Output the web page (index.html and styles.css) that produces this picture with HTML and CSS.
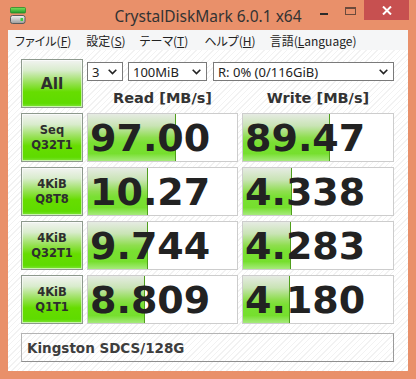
FILE: index.html
```html
<!DOCTYPE html>
<html lang="ja">
<head>
  <meta charset="UTF-8" />
  <title>CrystalDiskMark 6.0.1 x64</title>
  <link rel="stylesheet" href="styles.css">
</head>
<body>
  <div class="window">

    <!-- Title bar -->
    <div class="titlebar">
      <div class="tb-left">
        <svg class="app-icon" width="16" height="17" viewBox="0 0 16 17">
          <defs>
            <linearGradient id="gTop" x1="0" y1="0" x2="0" y2="1">
              <stop offset="0" stop-color="#7ee05a"/>
              <stop offset="1" stop-color="#1f9a2a"/>
            </linearGradient>
            <linearGradient id="gDrive" x1="0" y1="0" x2="0" y2="1">
              <stop offset="0" stop-color="#f4f4f4"/>
              <stop offset="1" stop-color="#9a9a9a"/>
            </linearGradient>
          </defs>
          <rect x="0.5" y="0.5" width="15" height="5.5" rx="1" fill="url(#gTop)" stroke="#2a8a2a" stroke-width="0.8"/>
          <rect x="0.5" y="8.5" width="14.5" height="8" rx="2" fill="url(#gDrive)" stroke="#5a5a5a"/>
          <rect x="10.5" y="11" width="2.5" height="3" fill="#3ccf3c"/>
        </svg>
      </div>
      <div class="title">CrystalDiskMark 6.0.1 x64</div>
      <div class="controls">
        <span class="btn-min"><i></i></span>
        <span class="btn-max"><i></i></span>
        <span class="btn-close">
          <svg width="10" height="9" viewBox="0 0 10 9">
            <path d="M1 0.5 L9 8.5 M9 0.5 L1 8.5" stroke="#fff" stroke-width="2"/>
          </svg>
        </span>
      </div>
    </div>

    <div class="client">

      <!-- Menu -->
      <div class="menubar">
        <span class="menu-item">ファイル(<u>F</u>)</span>
        <span class="menu-item">設定(<u>S</u>)</span>
        <span class="menu-item">テーマ(<u>T</u>)</span>
        <span class="menu-item">ヘルプ(<u>H</u>)</span>
        <span class="menu-item">言語(<u>L</u>anguage)</span>
      </div>

      <div class="main">
        <div class="grid">
          <div class="test-btn all">All</div>

          <div class="selects">
            <div class="combo count"><span>3</span><svg class="chev" width="9" height="6" viewBox="0 0 9 6"><path d="M0.7 0.8 L4.5 4.6 L8.3 0.8" fill="none" stroke="#222" stroke-width="1.6"/></svg></div>
            <div class="combo size"><span>100MiB</span><svg class="chev" width="9" height="6" viewBox="0 0 9 6"><path d="M0.7 0.8 L4.5 4.6 L8.3 0.8" fill="none" stroke="#222" stroke-width="1.6"/></svg></div>
            <div class="combo drive"><span>R: 0% (0/116GiB)</span><svg class="chev" width="9" height="6" viewBox="0 0 9 6"><path d="M0.7 0.8 L4.5 4.6 L8.3 0.8" fill="none" stroke="#222" stroke-width="1.6"/></svg></div>
          </div>

          <div class="col-head">Read [MB/s]</div>
          <div class="col-head">Write [MB/s]</div>

          <div class="test-btn">Seq<br>Q32T1</div>
          <div class="meter"><div class="bar" style="width:59%"></div><span class="value">97.00</span></div>
          <div class="meter"><div class="bar" style="width:58%"></div><span class="value">89.47</span></div>

          <div class="test-btn">4KiB<br>Q8T8</div>
          <div class="meter"><div class="bar" style="width:40.5%"></div><span class="value">10.27</span></div>
          <div class="meter"><div class="bar" style="width:32.5%"></div><span class="value">4.338</span></div>

          <div class="test-btn">4KiB<br>Q32T1</div>
          <div class="meter"><div class="bar" style="width:40%"></div><span class="value">9.744</span></div>
          <div class="meter"><div class="bar" style="width:32%"></div><span class="value">4.283</span></div>

          <div class="test-btn">4KiB<br>Q1T1</div>
          <div class="meter"><div class="bar" style="width:38.5%"></div><span class="value">8.809</span></div>
          <div class="meter"><div class="bar" style="width:31.5%"></div><span class="value">4.180</span></div>
        </div>

        <div class="comment">Kingston SDCS/128G</div>
      </div>
    </div>
  </div>
</body>
</html>
```

FILE: styles.css
```css
/* — Base — */
* { box-sizing: border-box; margin: 0; padding: 0; }
body {
  width: 416px; height: 379px; overflow: hidden;
  font-family: "DejaVu Sans", sans-serif;
  color: #222;
}

/* — Window frame — */
.window {
  height: 379px;
  background: #e9906a;
  padding: 0 8px 8px;
  display: flex; flex-direction: column;
}
.titlebar {
  height: 30px; margin: 0 -8px;
  display: grid; grid-template-columns: 1fr auto 1fr;
}
.app-icon { display: block; margin: 7px 0 0 10px; }
.title {
  font-family: "Noto Sans", sans-serif;
  font-size: 15.5px; color: #333;
  line-height: 30px; padding-top: 1px;
}
.controls {
  display: flex; justify-content: flex-end; align-items: flex-start;
  padding-right: 7px;
}
.btn-min, .btn-max { height: 20px; display: flex; justify-content: center; }
.btn-min { width: 26px; }
.btn-min i { width: 8px; height: 2px; margin-top: 13px; background: #2b2b2b; }
.btn-max { width: 27px; }
.btn-max i {
  width: 11px; height: 8px; margin-top: 7px;
  border: 1px solid #6b4a3c; border-top-width: 2px;
}
.btn-close {
  width: 45px; height: 20px; background: #c75050;
  display: flex; justify-content: center; align-items: center;
}

/* — Client area — */
.client {
  flex: 1;
  background: repeating-linear-gradient(135deg, #fff 0 3px, #f2f2f2 3px 4px);
  display: flex; flex-direction: column;
}
.menubar {
  height: 20px; background: #f5f6f7;
  display: flex;
  font-family: "Noto Sans CJK JP", sans-serif;
  font-feature-settings: "palt";
  font-size: 12px; line-height: 20px; color: #222;
}
.menu-item { padding: 1px 7px 0; }
.menu-item:nth-child(2) { padding-left: 8px; }
.menu-item:nth-child(4) { padding-left: 9px; }

.main { padding: 9px 14px 9px 13px; }
.grid {
  display: grid;
  grid-template-columns: 62px 151px 152px;
  grid-template-rows: 22px 22px repeat(4, 49px);
  column-gap: 4px; row-gap: 5px;
}

/* — Test buttons — */
.test-btn {
  border: 1px solid #8d998d;
  box-shadow: inset 0 0 0 1px rgba(255,255,255,0.6);
  background: linear-gradient(#f2f3f1 0%, #d9eccd 22%, #98e158 48%, #66dd00 68%, #5fdb00 92%, #7fe43a 100%);
  display: flex; justify-content: center; align-items: center;
  text-align: center;
  font-weight: bold; font-size: 11.5px; line-height: 15px; color: #2e2e2e;
  padding-top: 1px;
}
.test-btn.all { grid-row: span 2; font-size: 15.5px; padding-top: 2px; }

/* — Selects — */
.selects {
  grid-column: 2 / 4; align-self: end;
  display: flex; gap: 5px; height: 19px;
}
.combo {
  border: 1px solid #7a7a7a; background: #fff;
  display: flex; justify-content: space-between; align-items: center;
  padding: 0 5px 0 4px;
  font-family: "Noto Sans", sans-serif; font-size: 13px; color: #222;
}
.combo.count { width: 36px; }
.combo.size { width: 79px; }
.combo.drive { flex: 1; margin-left: 1px; }
.chev { flex: none; }

.col-head {
  align-self: center; text-align: center;
  font-weight: bold; font-size: 14.5px; color: #333;
  padding-top: 2px;
}

/* — Result meters — */
.meter {
  position: relative;
  border: 1px solid #cdcdcd; background: #fff;
  display: flex; align-items: center;
  overflow: hidden;
}
.bar {
  position: absolute; left: 0; top: 0; bottom: 0;
  background: linear-gradient(#e6ebe3 0%, #c9e4b5 25%, #8ede4e 50%, #79e032 62%, #76df2e 84%, #a6ea7c 100%);
  border-right: 1px solid #4f9e1c;
}
.value {
  position: relative;
  font-size: 38px; font-weight: bold; color: #222;
  padding-left: 2px; line-height: 1;
}

/* — Comment — */
.comment {
  margin-top: 9px; height: 29px;
  border: 1px solid #b4b4b4; border-bottom-color: #8f8f8f; border-right-color: #9a9a9a;
  display: flex; align-items: center;
  padding-left: 5px;
  font-weight: bold; font-size: 13.5px; color: #3d3d3d;
}
```
